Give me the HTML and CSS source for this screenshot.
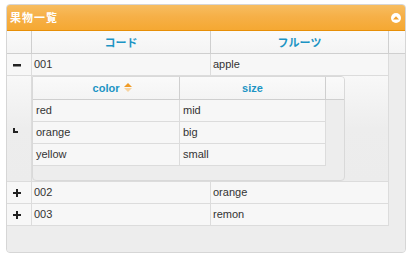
FILE: index.html
```html
<!DOCTYPE html>
<html lang="ja">
<head>
  <meta charset="UTF-8" />
  <title>果物一覧</title>
  <link rel="stylesheet" href="styles.css">
</head>
<body>

  <div class="grid">
    <!-- タイトル -->
    <div class="titlebar">
      <span class="caption">果物一覧</span>
      <svg class="toggle" width="10" height="10" viewBox="0 0 10 10">
        <circle cx="5" cy="5" r="5" fill="#fff"/>
        <path d="M2 6.5 L5 3.3 L8 6.5 Z" fill="#f2a12c"/>
      </svg>
    </div>

    <!-- ヘッダー -->
    <div class="hrow">
      <div class="hcell c-exp"></div>
      <div class="hcell c-code">コード</div>
      <div class="hcell c-fruit">フルーツ</div>
      <div class="hcell c-scroll"></div>
    </div>

    <!-- 明細 -->
    <div class="body">
      <div class="row">
        <div class="cell c-exp">
          <svg width="8" height="8" viewBox="0 0 8 8"><rect x="0" y="3" width="8" height="2.5" fill="#222"/></svg>
        </div>
        <div class="cell c-code">001</div>
        <div class="cell c-fruit">apple</div>
      </div>

      <div class="row subrow">
        <div class="cell c-exp">
          <svg class="corner" width="5" height="5" viewBox="0 0 5 5"><path d="M0 0 H2 V3 H5 V5 H0 Z" fill="#222"/></svg>
        </div>
        <div class="cell c-sub">
          <div class="subgrid">
            <div class="shrow">
              <div class="shcell s-color"><span class="label">color<svg class="sort" width="8" height="9" viewBox="0 0 8 9"><path d="M0 4 L4 0 L8 4 Z" fill="#ef9b27"/><path d="M0 5 L4 9 L8 5 Z" fill="#f7d3a0"/></svg></span></div>
              <div class="shcell s-size">size</div>
              <div class="shcell s-scroll"></div>
            </div>
            <div class="sbody">
              <div class="srow"><div class="scell s-color">red</div><div class="scell s-size">mid</div></div>
              <div class="srow"><div class="scell s-color">orange</div><div class="scell s-size">big</div></div>
              <div class="srow"><div class="scell s-color">yellow</div><div class="scell s-size">small</div></div>
            </div>
          </div>
        </div>
      </div>

      <div class="row">
        <div class="cell c-exp">
          <svg width="8" height="8" viewBox="0 0 8 8"><path d="M0 3 H8 V5 H0 Z M3 0 H5 V8 H3 Z" fill="#222"/></svg>
        </div>
        <div class="cell c-code">002</div>
        <div class="cell c-fruit">orange</div>
      </div>

      <div class="row">
        <div class="cell c-exp">
          <svg width="8" height="8" viewBox="0 0 8 8"><path d="M0 3 H8 V5 H0 Z M3 0 H5 V8 H3 Z" fill="#222"/></svg>
        </div>
        <div class="cell c-code">003</div>
        <div class="cell c-fruit">remon</div>
      </div>
    </div>
  </div>

</body>
</html>
```

FILE: styles.css
```css
/* 全体 */
body {
  margin: 0;
  padding: 4px 0 0 6px;
  font-family: "Liberation Sans", "Noto Sans CJK JP", sans-serif;
  font-size: 11px;
  color: #333;
  background: #fff;
}

/* グリッド本体 */
.grid {
  width: 400px;
  box-sizing: border-box;
  border: 1px solid #d6d6d6;
  border-radius: 4px;
  overflow: hidden;
  background: #ededed;
}

/* タイトル */
.titlebar {
  height: 26px;
  box-sizing: border-box;
  display: flex;
  align-items: center;
  justify-content: space-between;
  padding: 0 4px 0 3px;
  background: linear-gradient(#f7bd60, #f6b048 45%, #f5a832);
  border-bottom: 1px solid #e78f08;
  color: #fff;
  font-family: "Noto Sans CJK JP", sans-serif;
  font-weight: bold;
  font-size: 11px;
}

.caption {
  margin-top: -1px;
  letter-spacing: 1px;
}

.toggle {
  display: block;
}

/* ヘッダー */
.hrow {
  display: flex;
  height: 23px;
}

.hcell {
  box-sizing: border-box;
  height: 23px;
  line-height: 22px;
  text-align: center;
  background: linear-gradient(#fafafa, #f4f4f4);
  border-right: 1px solid #cfcfcf;
  border-bottom: 1px solid #cfcfcf;
  color: #1c94c4;
  font-family: "Noto Sans CJK JP", sans-serif;
  font-weight: bold;
}

.c-exp { width: 25px; }
.c-code { width: 179px; }
.c-fruit { width: 178px; }
.c-scroll { width: 16px; border-right: none; }
.c-sub { width: 357px; }

/* 明細 */
.body {
  height: 198px;
  background: #ededed;
}

.row {
  display: flex;
}

.cell {
  box-sizing: border-box;
  height: 22px;
  line-height: 21px;
  padding: 0 2px;
  background: #f7f7f7;
  border-right: 1px solid #dcdcdc;
  border-bottom: 1px solid #dcdcdc;
  white-space: nowrap;
}

.cell.c-exp {
  display: flex;
  align-items: center;
  padding: 0 0 0 6px;
}

.subrow .cell {
  height: 106px;
  padding: 0;
  background: linear-gradient(#f8f8f8, #ededed 50%, #ececec);
}

.subrow .cell.c-exp {
  padding-left: 6px;
}

.corner {
  margin-top: 3px;
}

/* サブグリッド */
.subgrid {
  width: 313px;
  height: 105px;
  box-sizing: border-box;
  border: 1px solid #d9d9d9;
  border-radius: 0 4px 4px 4px;
  overflow: hidden;
  background: #ededed;
}

.shrow {
  display: flex;
}

.shcell {
  box-sizing: border-box;
  height: 23px;
  line-height: 22px;
  text-align: center;
  background: linear-gradient(#fafafa, #f4f4f4);
  border-right: 1px solid #cfcfcf;
  border-bottom: 1px solid #cfcfcf;
  color: #1c94c4;
  font-weight: bold;
}

.s-color { width: 147px; }
.s-size { width: 146px; }
.s-scroll { width: 18px; border-right: none; }

.label {
  position: relative;
}

.sort {
  position: absolute;
  left: calc(100% + 5px);
  top: 1px;
}

.sbody {
  height: 80px;
}

.srow {
  display: flex;
}

.scell {
  box-sizing: border-box;
  height: 22px;
  line-height: 21px;
  padding: 0 3px;
  background: #f7f7f7;
  border-right: 1px solid #dcdcdc;
  border-bottom: 1px solid #dcdcdc;
}
```
